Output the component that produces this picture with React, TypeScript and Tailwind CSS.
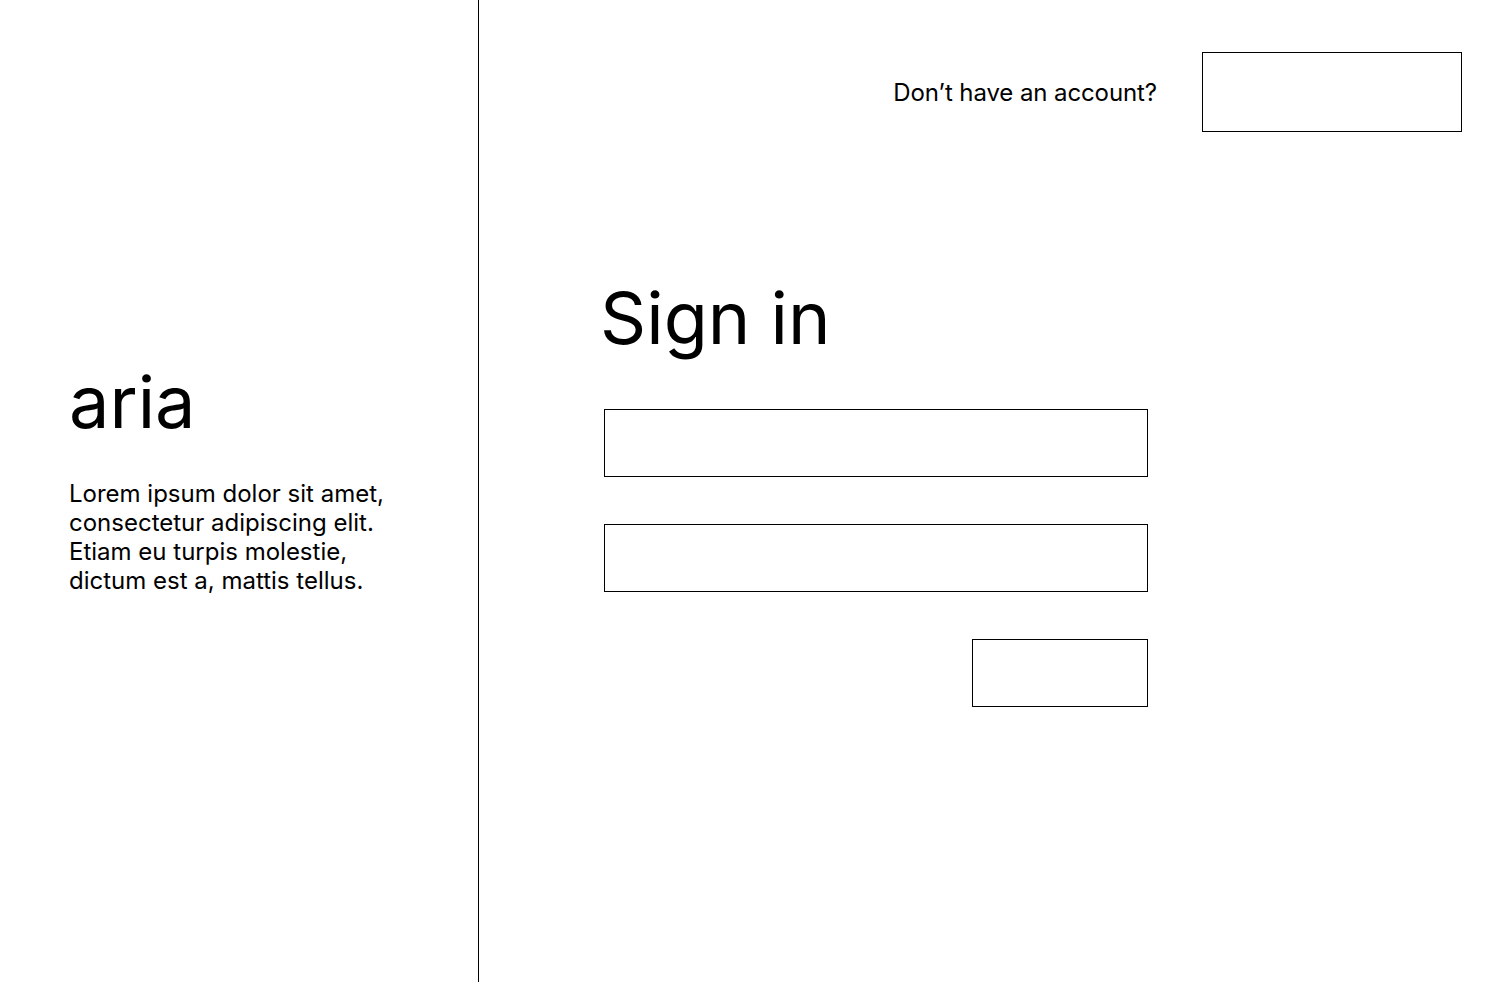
export default function App() {
  return (
    <div className="flex h-screen w-full bg-white text-black font-['Inter',sans-serif]">
      {/* Brand panel */}
      <div className="flex w-[479px] shrink-0 flex-col justify-center border-r border-black pb-[28px] pl-[69px]">
        <h1 className="text-[72px] leading-[86px] font-normal">aria</h1>
        <p className="mt-[34px] text-[24px] leading-[29px]">
          Lorem ipsum dolor sit amet,
          <br />
          consectetur adipiscing elit.
          <br />
          Etiam eu turpis molestie,
          <br />
          dictum est a, mattis tellus.
        </p>
      </div>

      {/* Sign in panel */}
      <div className="flex flex-1 flex-col">
        <div className="flex items-center justify-end gap-[45px] pt-[52px] pr-[50px]">
          <span className="text-[24px] leading-[29px] tracking-[-0.1px]">Don’t have an account?</span>
          <button className="h-[80px] w-[260px] border border-black" />
        </div>

        <div className="ml-[125px] mt-[143px] flex w-[544px] flex-col">
          <h2 className="-ml-[4px] text-[72px] leading-[86px] font-normal">Sign in</h2>
          <input className="mt-[48px] h-[68px] w-full border border-black outline-none" />
          <input
            type="password"
            className="mt-[47px] h-[68px] w-full border border-black outline-none"
          />
          <button className="mt-[47px] h-[68px] w-[176px] self-end border border-black" />
        </div>
      </div>
    </div>
  );
}
